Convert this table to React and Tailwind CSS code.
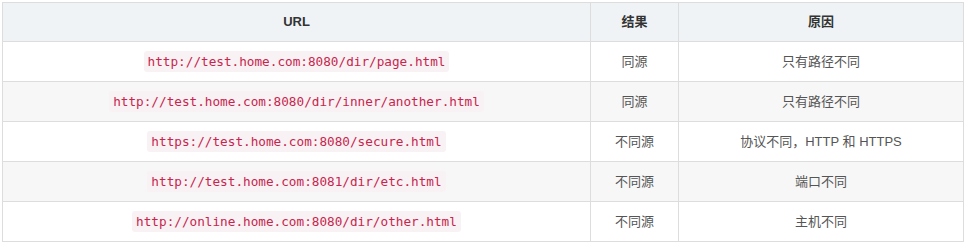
import React from 'react';

const rows = [
  { url: 'http://test.home.com:8080/dir/page.html', result: '同源', reason: '只有路径不同' },
  { url: 'http://test.home.com:8080/dir/inner/another.html', result: '同源', reason: '只有路径不同' },
  { url: 'https://test.home.com:8080/secure.html', result: '不同源', reason: '协议不同，HTTP 和 HTTPS' },
  { url: 'http://test.home.com:8081/dir/etc.html', result: '不同源', reason: '端口不同' },
  { url: 'http://online.home.com:8080/dir/other.html', result: '不同源', reason: '主机不同' },
];

const App = () => {
  return (
    <div className="bg-white p-[2px] w-[964px] h-[244px]" style={{ fontFamily: '"Liberation Sans", "Noto Sans CJK SC", sans-serif' }}>
      <table className="w-[962px] border-collapse text-[13px] text-[#555]">
        <thead>
          <tr className="bg-[#eff3f6] h-[39px]">
            <th className="border border-[#ddd] w-[588px] font-bold text-[#333]">URL</th>
            <th className="border border-[#ddd] w-[88px] font-bold text-[#333]">结果</th>
            <th className="border border-[#ddd] font-bold text-[#333]">原因</th>
          </tr>
        </thead>
        <tbody>
          {rows.map((row, i) => (
            <tr key={row.url} className={i % 2 === 1 ? 'bg-[#f7f7f7] h-[40px]' : 'bg-white h-[40px]'}>
              <td className="border border-[#ddd] text-center">
                <code
                  className="inline-block px-[4px] py-[2px] leading-[17px] rounded-[3px] bg-[#f9f2f4] text-[#c7254e] text-[12.7px]"
                  style={{ fontFamily: '"DejaVu Sans Mono", monospace' }}
                >
                  {row.url}
                </code>
              </td>
              <td className="border border-[#ddd] text-center">{row.result}</td>
              <td className="border border-[#ddd] text-center">{row.reason}</td>
            </tr>
          ))}
        </tbody>
      </table>
    </div>
  );
};

export default App;
